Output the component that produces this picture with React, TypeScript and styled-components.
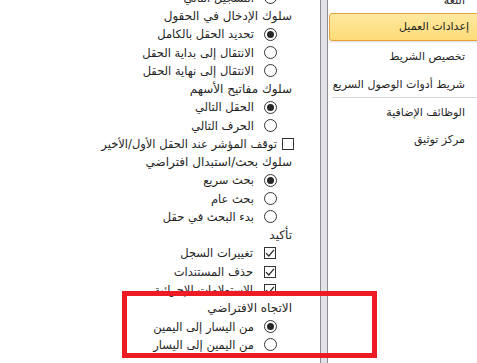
import styled, { createGlobalStyle } from "styled-components";

const GlobalStyle = createGlobalStyle`
  html, body {
    margin: 0;
    padding: 0;
    background: #ffffff;
    overflow: hidden;
  }
  body {
    font-family: "DejaVu Sans", "Noto Sans", sans-serif;
  }
`;

const Window = styled.div(() => ({
  position: "relative",
  width: 477,
  height: 363,
  display: "flex",
  overflow: "hidden",
  backgroundColor: "#ffffff",
}));

const ContentPane = styled.div(() => ({
  width: 320,
  flexShrink: 0,
  direction: "rtl",
  display: "flex",
  flexDirection: "column",
  marginTop: -11.4,
  fontSize: 11.5,
  color: "#1f1f1f",
}));

const Row = styled.div<{ $indent: number; $gap: number }>((props) => ({
  height: 18.28,
  display: "flex",
  alignItems: "center",
  gap: props.$gap,
  paddingRight: props.$indent,
  whiteSpace: "nowrap",
}));

const Heading = styled(Row)(() => ({
  color: "#262626",
  fontSize: 12,
}));

const Radio = styled.span<{ $checked: boolean }>((props) => ({
  width: 13,
  height: 13,
  boxSizing: "border-box",
  borderRadius: "50%",
  border: "1px solid #333333",
  backgroundColor: "#ffffff",
  flexShrink: 0,
  display: "flex",
  alignItems: "center",
  justifyContent: "center",
  "&::after": props.$checked
    ? {
        content: '""',
        width: 7,
        height: 7,
        borderRadius: "50%",
        backgroundColor: "#262626",
      }
    : {},
}));

const Box = styled.span(() => ({
  width: 12,
  height: 12,
  boxSizing: "border-box",
  border: "1px solid #333333",
  backgroundColor: "#ffffff",
  flexShrink: 0,
  display: "flex",
  alignItems: "center",
  justifyContent: "center",
}));

const Splitter = styled.div(() => ({
  width: 8,
  flexShrink: 0,
  boxSizing: "border-box",
  borderLeft: "1px solid #8d8d95",
  borderRight: "1px solid #8d8d95",
  backgroundColor: "#e2e2e6",
}));

const NavPane = styled.nav(() => ({
  flex: 1,
  direction: "rtl",
  display: "flex",
  flexDirection: "column",
  marginTop: -11,
  fontSize: 11,
  color: "#1f1f1f",
}));

const NavItem = styled.div<{ $gapAfter: number }>((props) => ({
  height: 24,
  lineHeight: "24px",
  paddingRight: 12,
  marginBottom: props.$gapAfter,
  whiteSpace: "nowrap",
}));

const SelectedItem = styled.div(() => ({
  height: 28,
  boxSizing: "border-box",
  lineHeight: "26px",
  paddingRight: 11,
  marginLeft: 1,
  marginRight: -4,
  border: "1px solid #e2a43a",
  borderRadius: 3,
  background: "linear-gradient(#fee9a0, #fddc78)",
  boxShadow: "0 1px 0 #e4e4e4, 0 2px 0 #f2f2f2",
  marginBottom: 4,
  whiteSpace: "nowrap",
}));

const NavSeparator = styled.div(() => ({
  height: 1,
  marginLeft: 4,
  marginBottom: 3,
  backgroundColor: "#d9d9d9",
}));

const Highlight = styled.div(() => ({
  position: "absolute",
  left: 122,
  top: 291,
  width: 255,
  height: 67,
  boxSizing: "border-box",
  border: "5px solid #ed1c24",
  pointerEvents: "none",
}));

type Option =
  | { kind: "heading"; label: string }
  | { kind: "radio"; label: string; checked?: boolean }
  | { kind: "check"; label: string; checked?: boolean; top?: boolean };

const options: Option[] = [
  { kind: "radio", label: "التسجيل التالي" },
  { kind: "heading", label: "سلوك الإدخال في الحقول" },
  { kind: "radio", label: "تحديد الحقل بالكامل", checked: true },
  { kind: "radio", label: "الانتقال إلى بداية الحقل" },
  { kind: "radio", label: "الانتقال إلى نهاية الحقل" },
  { kind: "heading", label: "سلوك مفاتيح الأسهم" },
  { kind: "radio", label: "الحقل التالي", checked: true },
  { kind: "radio", label: "الحرف التالي" },
  { kind: "check", label: "توقف المؤشر عند الحقل الأول/الأخير", top: true },
  { kind: "heading", label: "سلوك بحث/استبدال افتراضي" },
  { kind: "radio", label: "بحث سريع", checked: true },
  { kind: "radio", label: "بحث عام" },
  { kind: "radio", label: "بدء البحث في حقل" },
  { kind: "heading", label: "تأكيد" },
  { kind: "check", label: "تغييرات السجل", checked: true },
  { kind: "check", label: "حذف المستندات", checked: true },
  { kind: "check", label: "الاستعلامات الإجرائية", checked: true },
  { kind: "heading", label: "الاتجاه الافتراضي" },
  { kind: "radio", label: "من اليسار إلى اليمين", checked: true },
  { kind: "radio", label: "من اليمين إلى اليسار" },
];

const CheckMark = () => (
  <svg width="10" height="10" viewBox="0 0 10 10">
    <path d="M1 5.2 L3.8 8 L9 1.8" fill="none" stroke="#262626" strokeWidth="1.2" />
  </svg>
);

const OptionRow = ({ option }: { option: Option }) => {
  if (option.kind === "heading") {
    return (
      <Heading $indent={28} $gap={0}>
        {option.label}
      </Heading>
    );
  }
  if (option.kind === "radio") {
    return (
      <Row $indent={43} $gap={10}>
        <Radio $checked={!!option.checked} />
        <span>{option.label}</span>
      </Row>
    );
  }
  return (
    <Row $indent={option.top ? 26 : 44} $gap={option.top ? 5 : 11}>
      <Box>{option.checked && <CheckMark />}</Box>
      <span>{option.label}</span>
    </Row>
  );
};

const App = () => {
  return (
    <>
      <GlobalStyle />
      <Window>
        <ContentPane>
          {options.map((option, i) => (
            <OptionRow key={i} option={option} />
          ))}
        </ContentPane>
        <Splitter />
        <NavPane>
          <NavItem $gapAfter={0}>اللغة</NavItem>
          <SelectedItem>إعدادات العميل</SelectedItem>
          <NavItem $gapAfter={4}>تخصيص الشريط</NavItem>
          <NavItem $gapAfter={0}>شريط أدوات الوصول السريع</NavItem>
          <NavSeparator />
          <NavItem $gapAfter={3}>الوظائف الإضافية</NavItem>
          <NavItem $gapAfter={0}>مركز توثيق</NavItem>
        </NavPane>
        <Highlight />
      </Window>
    </>
  );
};

export default App;
